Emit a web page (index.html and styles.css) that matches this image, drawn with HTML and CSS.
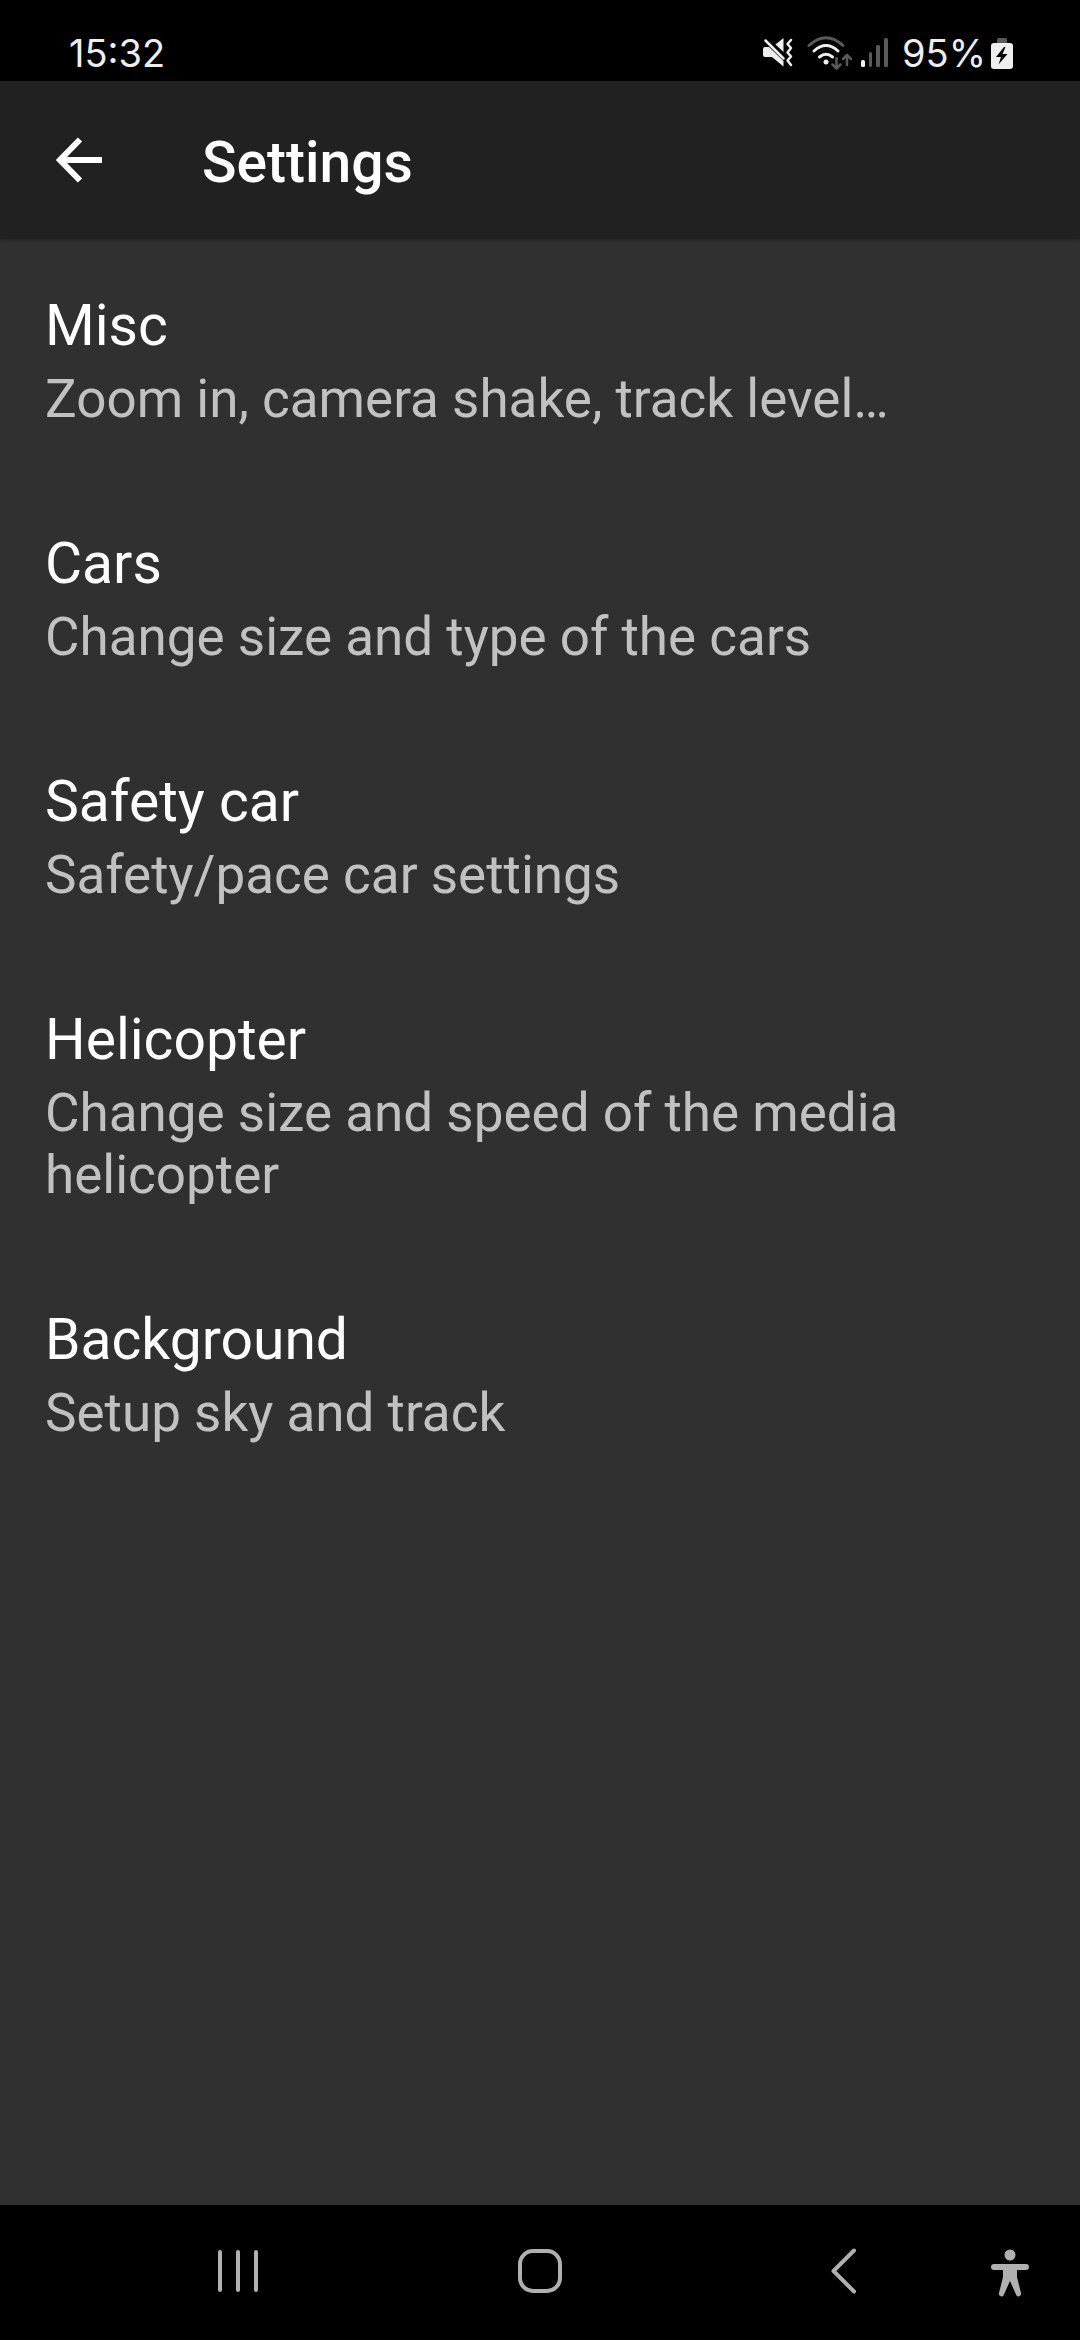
FILE: index.html
```html
<!DOCTYPE html>
<html lang="en">
<head>
  <meta charset="UTF-8" />
  <meta name="viewport" content="width=device-width, initial-scale=1.0" />
  <title>Settings</title>
  <link rel="stylesheet" href="styles.css">
</head>
<body>
  <div class="status-bar">
    <span class="clock">15:32</span>
    <div class="status-icons">
      <!-- muted / vibrate -->
      <svg class="icon-mute" width="30" height="30" viewBox="0 0 30 30">
        <path d="M0 11q0-2 2-2h4L20.500 23v5.500L9 19H2q-2 0-2-2zM12.500 6.500L20.500 0v14z" fill="#eee"/>
        <path d="M2.500 2.500L20.500 20.500" stroke="#eee" stroke-width="2.500" stroke-linecap="round"/>
        <path d="M28 2l-3.500 4 3.500 4-3.500 4.500 3.500 4-3.500 4 3.500 4.500" fill="none" stroke="#eee" stroke-width="2.500" stroke-linecap="round" stroke-linejoin="round"/>
      </svg>
      <!-- wifi with traffic arrows -->
      <svg class="icon-wifi" width="45" height="34" viewBox="0 0 45 34">
        <g fill="none" stroke-width="3" stroke-linecap="round">
          <path d="M2 9.500Q19 -6 36 9.500" stroke="#5a5a5a"/>
          <path d="M7 15Q19 4 31 15" stroke="#eee"/>
          <path d="M12.500 21Q19 15.500 25.500 21" stroke="#eee"/>
        </g>
        <circle cx="19" cy="26" r="2.500" fill="#eee"/>
        <path d="M29.500 22v10M25.500 28.500l4 4 4-4M40 29V19M36 23l4-4 4 4" fill="none" stroke="#5a5a5a" stroke-width="2.500" stroke-linecap="round" stroke-linejoin="round"/>
      </svg>
      <!-- signal, one bar -->
      <svg class="icon-signal" width="27" height="30" viewBox="0 0 27 30">
        <rect x="0" y="22" width="4" height="7" rx="1.500" fill="#eee"/>
        <g fill="#5a5a5a">
          <rect x="8" y="14" width="3" height="15" rx="1.500"/>
          <rect x="15" y="7" width="4" height="22" rx="1.500"/>
          <rect x="23" y="0" width="4" height="29" rx="1.500"/>
        </g>
      </svg>
      <span class="battery-level">95%</span>
      <svg class="icon-battery" width="22" height="31" viewBox="0 0 22 31">
        <path d="M6 5V2q0-2 2-2h6q2 0 2 2v3z" fill="#5a5a5a"/>
        <rect x="0" y="5" width="22" height="26" rx="3" fill="#eee"/>
        <path d="M13 9L5 19h5L7.500 26.500 16.500 16H11.500L14.500 9z" fill="#000"/>
      </svg>
    </div>
  </div>

  <header class="app-bar">
    <button class="back" type="button" aria-label="Back">
      <svg width="46" height="46" viewBox="0 0 46 46">
        <path d="M24 2.500L4 23l20 20.500M4 23h42" fill="none" stroke="#fff" stroke-width="6"/>
      </svg>
    </button>
    <h1>Settings</h1>
  </header>

  <main class="settings">
    <a class="item" href="#misc">
      <span class="title">Misc</span>
      <span class="summary">Zoom in, camera shake, track level…</span>
    </a>
    <a class="item" href="#cars">
      <span class="title">Cars</span>
      <span class="summary">Change size and type of the cars</span>
    </a>
    <a class="item" href="#safety-car">
      <span class="title">Safety car</span>
      <span class="summary">Safety/pace car settings</span>
    </a>
    <a class="item" href="#helicopter">
      <span class="title">Helicopter</span>
      <span class="summary">Change size and speed of the media helicopter</span>
    </a>
    <a class="item" href="#background">
      <span class="title">Background</span>
      <span class="summary">Setup sky and track</span>
    </a>
  </main>

  <nav class="nav-bar">
    <button class="recents" type="button" aria-label="Recent apps">
      <svg width="44" height="44" viewBox="0 0 44 44">
        <path d="M2 3v38M20 3v38M38 3v38" stroke="#b0b0b0" stroke-width="4" stroke-linecap="round"/>
      </svg>
    </button>
    <button class="home" type="button" aria-label="Home">
      <svg width="44" height="44" viewBox="0 0 44 44">
        <rect x="2" y="2" width="40" height="40" rx="13" fill="none" stroke="#b0b0b0" stroke-width="4"/>
      </svg>
    </button>
    <button class="nav-back" type="button" aria-label="Back">
      <svg width="44" height="46" viewBox="0 0 44 46">
        <path d="M36 2.500L15.500 23 36 43.500" fill="none" stroke="#b0b0b0" stroke-width="4" stroke-linecap="round" stroke-linejoin="round"/>
      </svg>
    </button>
    <button class="accessibility" type="button" aria-label="Accessibility">
      <svg width="40" height="52" viewBox="0 -4 40 52">
        <circle cx="20" cy="6" r="5.500" fill="#b0b0b0"/>
        <path d="M4 15h32a3 3 0 0 1 0 6h-9v7l4 16a2.500 2.500 0 0 1-5 1.500L20 32l-6 13.500a2.500 2.500 0 0 1-5-1.500l4-16v-7H4a3 3 0 0 1 0-6z" fill="#b0b0b0"/>
      </svg>
    </button>
  </nav>
</body>
</html>
```
FILE: styles.css
```css
* {
  box-sizing: border-box;
}

body {
  margin: 0;
  min-height: 100vh;
  display: flex;
  flex-direction: column;
  background: #303030;
  color: #fff;
  font-family: Roboto, sans-serif;
}

svg {
  display: block;
}

button {
  display: flex;
  align-items: center;
  justify-content: center;
  padding: 0;
  border: none;
  background: none;
  cursor: pointer;
}

.status-bar {
  display: flex;
  justify-content: space-between;
  align-items: center;
  height: 81px;
  padding: 25px 67px 0 69px;
  background: #000;
  color: #eee;
  font-family: Inter, sans-serif;
  font-size: 38px;
  line-height: 48px;
}

.status-icons {
  display: flex;
  align-items: center;
}

.icon-wifi {
  margin-left: 14px;
}

.icon-signal {
  margin-left: 9px;
}

.battery-level {
  margin-left: 14px;
}

.icon-battery {
  margin-left: 5px;
}

.app-bar {
  display: flex;
  align-items: center;
  height: 158px;
  padding: 0 45px 0 56px;
  background: #212121;
  box-shadow: 0 1px 4px rgba(0, 0, 0, 0.3);
}

h1 {
  margin: 0 0 0 100px;
  padding-top: 5px;
  font-size: 57px;
  font-weight: 500;
  line-height: 68px;
}

.settings {
  flex: 1;
  padding-top: 3px;
}

.item {
  display: flex;
  flex-direction: column;
  gap: 8px;
  padding: 50px 45px;
  color: #fff;
  text-decoration: none;
}

.title {
  font-size: 57px;
  line-height: 68px;
}

.summary {
  color: #c1c1c1;
  font-size: 53px;
  line-height: 62px;
}

.nav-bar {
  display: grid;
  grid-template-columns: 90px 1fr 1fr 1fr 90px;
  align-items: center;
  height: 135px;
  padding-bottom: 3px;
  background: #000;
}

.recents {
  grid-column: 2;
}

.accessibility {
  justify-content: flex-start;
}
```
